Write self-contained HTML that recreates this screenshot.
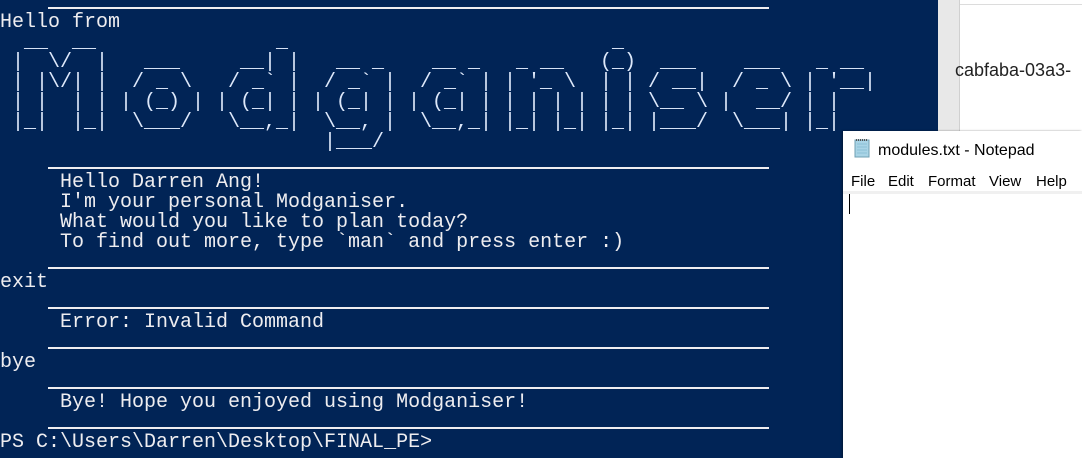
<!DOCTYPE html>
<html><head><meta charset="utf-8"><style>
*{margin:0;padding:0}
html,body{width:1082px;height:458px;overflow:hidden;background:#fff}
#con{position:absolute;left:0;top:0;width:938px;height:458px;background:#012456;overflow:hidden}
pre{position:absolute;left:0;font-family:"Liberation Mono",monospace;font-size:20px;line-height:20px;color:#eeedf0;white-space:pre}
.a{color:#dde8fa;top:33px}
.sep{position:absolute;left:48px;width:721px;height:2px;background:#eeedf0}
#gray{position:absolute;left:938px;top:0;width:21px;height:458px;background:#e8e8e8}
#wp{position:absolute;left:959px;top:0;width:123px;height:458px;background:#fff;border-left:1px solid #d0d0d0}
#wp .ln{position:absolute;left:0;top:4px;width:123px;height:1px;background:#dcdcdc}
#wp .t{position:absolute;left:-5px;top:60px;font-family:"Liberation Sans",sans-serif;font-size:18px;color:#222}
#np{position:absolute;left:843px;top:131px;width:239px;height:327px;background:#fff;box-shadow:-1px 0 2px rgba(0,0,0,.4)}
#np .title{position:absolute;left:35px;top:11px;font-family:"Liberation Sans",sans-serif;font-size:16px;color:#000}
#np .m{position:absolute;top:42px;font-family:"Liberation Sans",sans-serif;font-size:15px;color:#000}
#np .bar{position:absolute;left:0;top:60px;width:239px;height:3px;background:#f0f0f0}
#np .caret{position:absolute;left:6px;top:63px;width:1px;height:20px;background:#000}
</style></head><body>
<div id="con">
<div class="sep" style="top:7px"></div>
<pre style="top:13px">Hello from</pre>
<pre class="a" style="left:12px"> __  __
|  \/  |
| |\/| |
| |  | |
|_|  |_|</pre>
<pre class="a" style="left:120px"> 
  ___
 / _ \
| (_) |
 \___/</pre>
<pre class="a" style="left:216px">     _
  __| |
 / _` |
| (_| |
 \__,_|</pre>
<pre class="a" style="left:312px"> 
  __ _
 / _` |
| (_| |
 \__, |
 |___/</pre>
<pre class="a" style="left:408px"> 
  __ _
 / _` |
| (_| |
 \__,_|</pre>
<pre class="a" style="left:504px"> 
 _ __
| '_ \
| | | |
|_| |_|</pre>
<pre class="a" style="left:600px"> _
(_)
| |
| |
|_|</pre>
<pre class="a" style="left:648px"> 
 ___
/ __|
\__ \
|___/</pre>
<pre class="a" style="left:720px"> 
  ___
 / _ \
|  __/
 \___|</pre>
<pre class="a" style="left:804px"> 
 _ __
| '__|
| |
|_|</pre>
<div class="sep" style="top:167px"></div>
<pre style="top:173px">     Hello Darren Ang!
     I'm your personal Modganiser.
     What would you like to plan today?
     To find out more, type `man` and press enter :)</pre>
<div class="sep" style="top:267px"></div>
<pre style="top:273px">exit</pre>
<div class="sep" style="top:307px"></div>
<pre style="top:313px">     Error: Invalid Command</pre>
<div class="sep" style="top:347px"></div>
<pre style="top:353px">bye</pre>
<div class="sep" style="top:387px"></div>
<pre style="top:393px">     Bye! Hope you enjoyed using Modganiser!</pre>
<div class="sep" style="top:427px"></div>
<pre style="top:433px">PS C:\Users\Darren\Desktop\FINAL_PE&gt;</pre>
</div>
<div id="gray"></div>
<div id="wp"><div class="ln"></div><div class="t">cabfaba-03a3-</div></div>
<div id="np">
<svg style="position:absolute;left:10px;top:7px" width="18" height="20" viewBox="0 0 18 20">
<rect x="2" y="2" width="14" height="17" fill="#a9d4e6" stroke="#6f9fb3"/>
<path d="M3 2h12" stroke="#555" stroke-width="2" stroke-dasharray="1 1"/>
<path d="M4 6h10M4 9h10M4 12h10M4 15h10" stroke="#8cc0d6"/>
</svg>
<div class="title">modules.txt - Notepad</div>
<div class="m" style="left:8px">File</div>
<div class="m" style="left:45px">Edit</div>
<div class="m" style="left:85px">Format</div>
<div class="m" style="left:146px">View</div>
<div class="m" style="left:193px">Help</div>
<div class="bar"></div>
<div class="caret"></div>
</div>
</body></html>
